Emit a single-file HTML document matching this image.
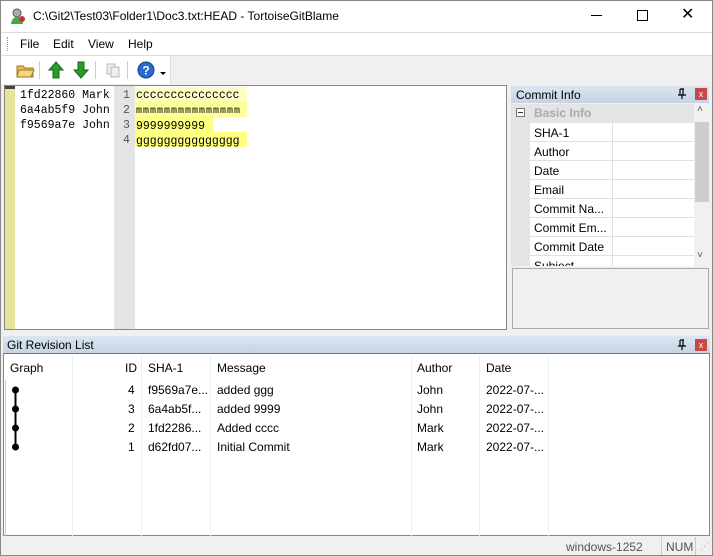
<!DOCTYPE html><html><head><style>
*{margin:0;padding:0;box-sizing:border-box}
body{width:713px;height:556px;background:#f0f0f0;font-family:"Liberation Sans",sans-serif;font-size:12px;color:#000;position:relative;overflow:hidden}
.a{position:absolute}
.mono{font-family:"Liberation Mono",monospace;font-size:11.5px}
.hdr{background:linear-gradient(#dce6f2,#c6d3e3);color:#000}
.cell{position:absolute;border-bottom:1px solid #e0e0e0;background:#fff;height:19px;padding:3px 4px;font-size:12px}
</style></head><body>
<div class="a" style="left:0;top:0;width:713px;height:556px;border:1px solid #888"></div>
<div class="a" style="left:1px;top:1px;width:711px;height:31px;background:#fff"></div>
<svg class="a" style="left:9px;top:7px" width="18" height="18"><circle cx="8" cy="6" r="4" fill="#aaa" stroke="#555"/><path d="M2 17 Q3 10 8 10 Q13 10 14 17Z" fill="#4a4"/><circle cx="13" cy="12" r="3" fill="#c33"/></svg>
<div class="a" style="left:33px;top:9px;font-size:12px">C:\Git2\Test03\Folder1\Doc3.txt:HEAD - TortoiseGitBlame</div>
<div class="a" style="left:591px;top:15px;width:11px;height:1px;background:#000"></div>
<div class="a" style="left:637px;top:10px;width:11px;height:11px;border:1px solid #000"></div>
<div class="a" style="left:681px;top:4px;font-size:16px">✕</div>
<div class="a" style="left:1px;top:32px;width:711px;height:24px;background:#fff;border-top:1px solid #ddd;border-bottom:1px solid #ddd"></div>
<div class="a" style="left:7px;top:37px;width:2px;height:14px;border-left:1px dotted #999"></div>
<div class="a" style="left:20px;top:37px">File</div><div class="a" style="left:53px;top:37px">Edit</div><div class="a" style="left:88px;top:37px">View</div><div class="a" style="left:128px;top:37px">Help</div>
<div class="a" style="left:1px;top:56px;width:170px;height:28px;background:#fff;border-right:1px solid #ddd"></div>
<svg class="a" style="left:15px;top:60px" width="22" height="20"><path d="M2 6h6l2 2h8v9H2z" fill="#e8b84a" stroke="#9a7a2a"/><path d="M4 10h15l-3 7H2z" fill="#f5d680" stroke="#9a7a2a"/></svg>
<div class="a" style="left:39px;top:61px;width:1px;height:18px;background:#ccc"></div>
<svg class="a" style="left:48px;top:61px" width="16" height="18"><path d="M8 1L15 9H11V17H5V9H1Z" fill="#2a9a2a" stroke="#1a6a1a"/></svg>
<svg class="a" style="left:73px;top:61px" width="16" height="18"><path d="M8 17L15 9H11V1H5V9H1Z" fill="#2a9a2a" stroke="#1a6a1a"/></svg>
<div class="a" style="left:95px;top:61px;width:1px;height:18px;background:#ccc"></div>
<svg class="a" style="left:105px;top:62px" width="16" height="16"><rect x="2" y="2" width="8" height="10" fill="#eee" stroke="#bbb"/><rect x="6" y="5" width="8" height="10" fill="#eee" stroke="#bbb"/></svg>
<div class="a" style="left:127px;top:61px;width:1px;height:18px;background:#ccc"></div>
<svg class="a" style="left:137px;top:61px" width="18" height="18"><circle cx="9" cy="9" r="8" fill="#2a6ad0" stroke="#15408a"/><text x="9" y="13.5" font-size="12" font-weight="bold" fill="#fff" text-anchor="middle" font-family="Liberation Sans">?</text></svg>
<div class="a" style="left:160px;top:72px;border:3px solid transparent;border-top:3px solid #000"></div>
<!-- editor -->
<div class="a" style="left:4px;top:85px;width:503px;height:245px;background:#fff;border:1px solid #888"></div>
<div class="a" style="left:5px;top:86px;width:10px;height:243px;background:#e6e39a"></div>
<div class="a" style="left:5px;top:86px;width:10px;height:3px;background:#444"></div>
<div class="a mono" style="left:20px;top:88px;line-height:15px;white-space:pre">1fd22860 Mark
6a4ab5f9 John
f9569a7e John</div>
<div class="a" style="left:114px;top:86px;width:21px;height:243px;background:#e4e4e4"></div>
<div class="a mono" style="left:123px;top:88px;line-height:15px;color:#555;white-space:pre">1
2
3
4</div>
<div class="a" style="left:135px;top:87px;width:112px;height:15px;background:#ffffc4"></div>
<div class="a" style="left:135px;top:102px;width:112px;height:15px;background:#ffff99"></div>
<div class="a" style="left:135px;top:117px;width:78px;height:15px;background:#ffff80"></div>
<div class="a" style="left:135px;top:132px;width:112px;height:15px;background:#ffff80"></div>
<div class="a mono" style="left:136px;top:88px;line-height:15px;white-space:pre">ccccccccccccccc
<span style="letter-spacing:1px;font-size:10px">mmmmmmmmmmmmmmm</span>
9999999999
ggggggggggggggg</div>
<!-- commit info -->
<div class="a hdr" style="left:511px;top:86px;width:198px;height:17px;padding:2px 5px">Commit Info</div>
<svg class="a" style="left:677px;top:88px" width="10" height="12"><path d="M3 1h4M3 1v6M6 1v6M1 7h8M5 7v4" stroke="#000" stroke-width="1.2" fill="none"/></svg>
<div class="a" style="left:695px;top:88px;width:12px;height:12px;background:#c84848;color:#fff;font-size:9px;text-align:center;line-height:12px">x</div>
<div class="a" style="left:511px;top:104px;width:183px;height:162px;background:#e4e4e4;overflow:hidden">
<div class="a" style="left:5px;top:4px;width:9px;height:9px;border:1px solid #777;background:#fff"></div>
<div class="a" style="left:7px;top:8px;width:5px;height:1px;background:#333"></div>
<div class="a" style="left:23px;top:2px;color:#aaa;font-weight:bold">Basic Info</div>
<div class="cell" style="left:19px;top:19px;width:82px">SHA-1</div><div class="cell" style="left:101px;top:19px;width:82px;border-left:1px solid #e0e0e0"></div>
<div class="cell" style="left:19px;top:38px;width:82px">Author</div><div class="cell" style="left:101px;top:38px;width:82px;border-left:1px solid #e0e0e0"></div>
<div class="cell" style="left:19px;top:57px;width:82px">Date</div><div class="cell" style="left:101px;top:57px;width:82px;border-left:1px solid #e0e0e0"></div>
<div class="cell" style="left:19px;top:76px;width:82px">Email</div><div class="cell" style="left:101px;top:76px;width:82px;border-left:1px solid #e0e0e0"></div>
<div class="cell" style="left:19px;top:95px;width:82px">Commit Na...</div><div class="cell" style="left:101px;top:95px;width:82px;border-left:1px solid #e0e0e0"></div>
<div class="cell" style="left:19px;top:114px;width:82px">Commit Em...</div><div class="cell" style="left:101px;top:114px;width:82px;border-left:1px solid #e0e0e0"></div>
<div class="cell" style="left:19px;top:133px;width:82px">Commit Date</div><div class="cell" style="left:101px;top:133px;width:82px;border-left:1px solid #e0e0e0"></div>
<div class="cell" style="left:19px;top:152px;width:82px">Subject</div><div class="cell" style="left:101px;top:152px;width:82px;border-left:1px solid #e0e0e0"></div>
</div>
<div class="a" style="left:694px;top:104px;width:15px;height:162px;background:#f0f0f0"></div>
<div class="a" style="left:695px;top:122px;width:14px;height:80px;background:#cdcdcd"></div>
<div class="a" style="left:697px;top:104px;font-size:10px;color:#555">˄</div>
<div class="a" style="left:697px;top:250px;font-size:10px;color:#555">˅</div>
<div class="a" style="left:512px;top:268px;width:197px;height:61px;border:1px solid #aaa;background:#f0f0f0"></div>
<!-- revision list -->
<div class="a hdr" style="left:3px;top:336px;width:707px;height:17px;padding:2px 4px">Git Revision List</div>
<svg class="a" style="left:677px;top:339px" width="10" height="12"><path d="M3 1h4M3 1v6M6 1v6M1 7h8M5 7v4" stroke="#000" stroke-width="1.2" fill="none"/></svg>
<div class="a" style="left:695px;top:339px;width:12px;height:12px;background:#c84848;color:#fff;font-size:9px;text-align:center;line-height:12px">x</div>
<div class="a" style="left:3px;top:353px;width:707px;height:183px;background:#fff;border:1px solid #888;border-top-color:#777"></div>
<div class="a" style="left:4px;top:354px;width:705px;height:26px;background:#fff"></div>
<div class="a" style="left:72px;top:356px;width:1px;height:180px;background:#e8eef8"></div>
<div class="a" style="left:141px;top:356px;width:1px;height:180px;background:#e8eef8"></div>
<div class="a" style="left:210px;top:356px;width:1px;height:180px;background:#e8eef8"></div>
<div class="a" style="left:411px;top:356px;width:1px;height:180px;background:#e8eef8"></div>
<div class="a" style="left:479px;top:356px;width:1px;height:180px;background:#e8eef8"></div>
<div class="a" style="left:548px;top:356px;width:1px;height:180px;background:#e8eef8"></div>
<div class="a" style="left:5px;top:380px;width:1px;height:156px;background:#bcd"></div>
<div class="a" style="left:10px;top:361px">Graph</div>
<div class="a" style="left:125px;top:361px">ID</div>
<div class="a" style="left:148px;top:361px">SHA-1</div>
<div class="a" style="left:217px;top:361px">Message</div>
<div class="a" style="left:417px;top:361px">Author</div>
<div class="a" style="left:486px;top:361px">Date</div>
<svg class="a" style="left:8px;top:383px" width="16" height="70"><path d="M7.5 7V64" stroke="#000" stroke-width="2"/><circle cx="7.5" cy="7" r="3.5"/><circle cx="7.5" cy="26" r="3.5"/><circle cx="7.5" cy="45" r="3.5"/><circle cx="7.5" cy="64" r="3.5"/></svg>
<div class="a" style="left:128px;top:381px;line-height:19px;text-align:right">4<br>3<br>2<br>1</div>
<div class="a" style="left:148px;top:381px;line-height:19px">f9569a7e...<br>6a4ab5f...<br>1fd2286...<br>d62fd07...</div>
<div class="a" style="left:217px;top:381px;line-height:19px">added ggg<br>added 9999<br>Added cccc<br>Initial Commit</div>
<div class="a" style="left:417px;top:381px;line-height:19px">John<br>John<br>Mark<br>Mark</div>
<div class="a" style="left:486px;top:381px;line-height:19px">2022-07-...<br>2022-07-...<br>2022-07-...<br>2022-07-...</div>
<!-- status -->
<div class="a" style="left:566px;top:540px;color:#555">windows-1252</div>
<div class="a" style="left:661px;top:537px;width:1px;height:18px;background:#ccc"></div>
<div class="a" style="left:666px;top:540px;color:#555">NUM</div>
<div class="a" style="left:695px;top:537px;width:1px;height:18px;background:#ccc"></div>
<div class="a" style="left:700px;top:541px;color:#aaa;font-size:9px">⋰</div>
</body></html>
